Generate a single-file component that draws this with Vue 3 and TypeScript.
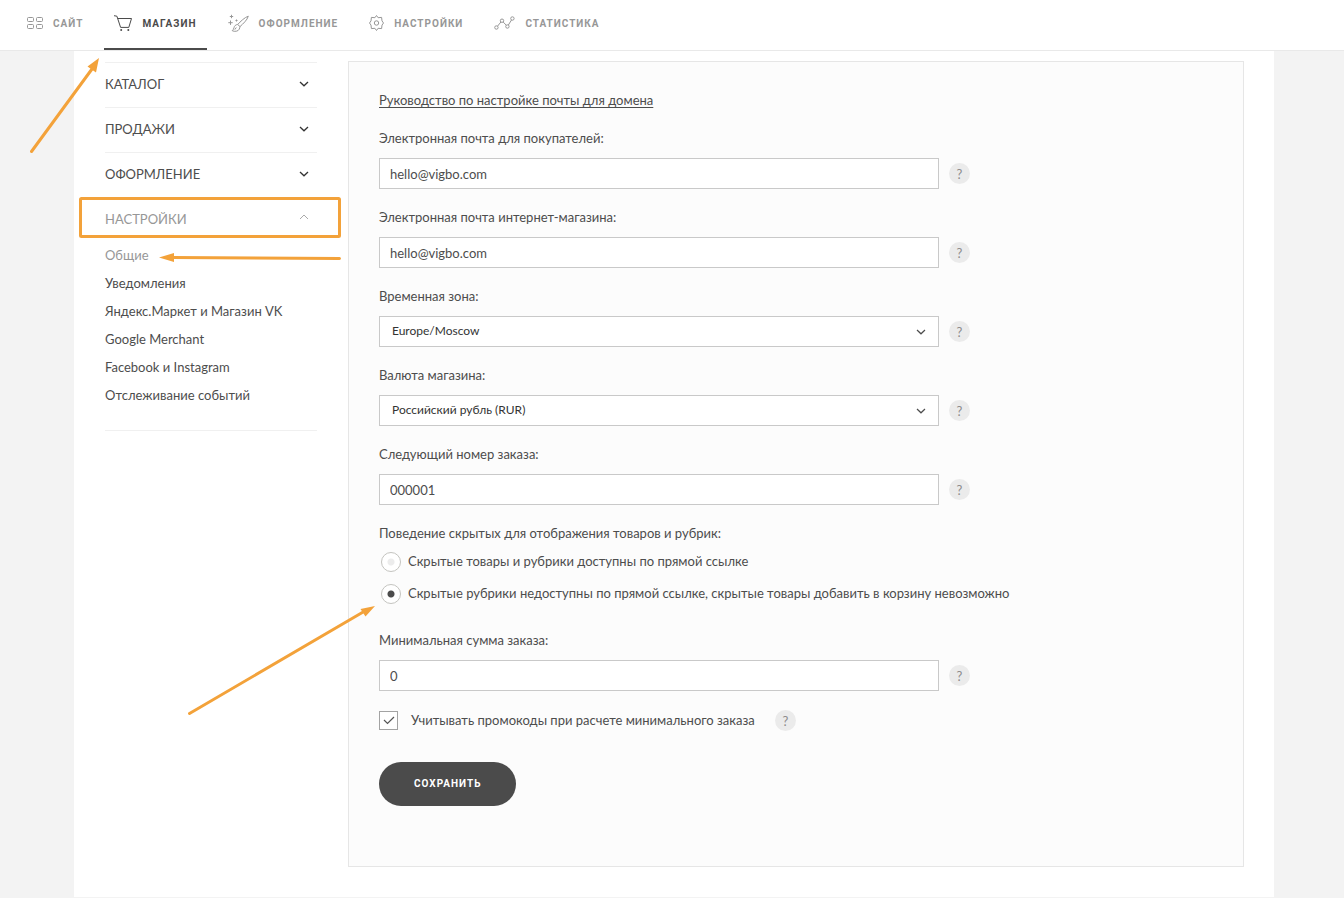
<script setup lang="ts">
import { ref } from 'vue'

interface NavItem { id: string; title: string }
interface Field {
  id: string
  label: string
  kind: 'text' | 'select'
  value: string
}

const nav: NavItem[] = [
  { id: 'site', title: 'Сайт' },
  { id: 'shop', title: 'Магазин' },
  { id: 'design', title: 'Оформление' },
  { id: 'settings', title: 'Настройки' },
  { id: 'stats', title: 'Статистика' },
]
const activeNav = ref('shop')

const sections: string[] = ['Каталог', 'Продажи', 'Оформление']
const links: string[] = [
  'Общие',
  'Уведомления',
  'Яндекс.Маркет и Магазин VK',
  'Google Merchant',
  'Facebook и Instagram',
  'Отслеживание событий',
]

const fields = ref<Field[]>([
  { id: 'customer-mail', label: 'Электронная почта для покупателей:', kind: 'text', value: 'hello@vigbo.com' },
  { id: 'shop-mail', label: 'Электронная почта интернет-магазина:', kind: 'text', value: 'hello@vigbo.com' },
  { id: 'timezone', label: 'Временная зона:', kind: 'select', value: 'Europe/Moscow' },
  { id: 'currency', label: 'Валюта магазина:', kind: 'select', value: 'Российский рубль (RUR)' },
  { id: 'next-order', label: 'Следующий номер заказа:', kind: 'text', value: '000001' },
])
const hiddenModes: string[] = [
  'Скрытые товары и рубрики доступны по прямой ссылке',
  'Скрытые рубрики недоступны по прямой ссылке, скрытые товары добавить в корзину невозможно',
]
const hiddenMode = ref(1)
const minimum = ref('0')
const usePromo = ref(true)
</script>

<template>
  <div class="page">
    <header class="topbar">
      <nav class="topnav">
        <a
          v-for="item in nav"
          :key="item.id"
          href="#"
          class="topnav-item"
          :class="{ active: item.id === activeNav }"
          @click.prevent="activeNav = item.id"
        >
          <svg v-if="item.id === 'site'" class="icon" width="16" height="18" viewBox="0 0 16 18">
            <rect x="0.5" y="3.5" width="6" height="4" rx="1" />
            <rect x="9.5" y="3.5" width="6" height="4" rx="1" />
            <rect x="0.5" y="10.5" width="6" height="4" rx="1" />
            <rect x="9.5" y="10.5" width="6" height="4" rx="1" />
          </svg>
          <svg v-else-if="item.id === 'shop'" class="icon" width="18" height="18" viewBox="0 0 18 18">
            <path d="M0 1.700L2.900 2.200L6.600 13.400H14.800L17.500 4.500H3.700" />
            <circle class="solid" cx="7.2" cy="16" r="1" />
            <circle class="solid" cx="14.3" cy="16" r="1" />
          </svg>
          <svg v-else-if="item.id === 'design'" class="icon" width="21" height="18" viewBox="0 0 21 18">
            <path d="M3.500 0.800v3.400M1.800 2.500h3.400M2.500 6.500v4.400M0.300 8.700h4.400M8.500 5.500v2M7.500 6.500h2" />
            <path d="M20.300 2.200C17 3.200 12.300 7.500 9.700 10.500L12 12.600C15 9.800 19.300 6 20.300 2.200Z" />
            <path d="M9.700 10.500C7.600 10.600 6.300 12 6 13.700C5.800 15 5.100 15.900 4.200 16.700C6.600 17.900 10.300 17.400 11.200 15.200C11.600 14.200 11.900 13.500 12 12.600M8.300 13.500L6.800 15.600" />
          </svg>
          <svg v-else-if="item.id === 'settings'" class="icon" width="15" height="18" viewBox="0 0 15 18">
            <path d="M7.500 1.500L9.100 3.700L12.600 3.400L13 6.900L14.500 9L13 11.100L12.600 14.600L9.100 14.300L7.500 16.500L5.900 14.300L2.400 14.600L2 11.100L0.500 9L2 6.900L2.400 3.400L5.900 3.700Z" />
            <circle cx="7.5" cy="9" r="2.2" />
          </svg>
          <svg v-else class="icon" width="21" height="18" viewBox="0 0 21 18">
            <circle cx="2.400" cy="13.500" r="1.700" />
            <circle cx="8" cy="6.700" r="1.700" />
            <circle cx="13.400" cy="12.500" r="1.700" />
            <circle cx="18.400" cy="4.500" r="1.700" />
            <path d="M3.500 12.200L6.900 8M9.100 8L12.300 11.200M14.300 11.100L17.500 6" />
          </svg>
          <span>{{ item.title }}</span>
        </a>
      </nav>
    </header>

    <div class="body">
      <aside class="sidebar">
        <button v-for="s in sections" :key="s" type="button" class="section">
          <span>{{ s }}</span>
          <svg class="chevron" width="10" height="6" viewBox="0 0 10 6"><path d="M1 1L5 4.800L9 1" /></svg>
        </button>
        <button type="button" class="section open">
          <span>Настройки</span>
          <svg class="chevron" width="10" height="12" viewBox="0 0 10 12"><path d="M1 6L5 2L9 6" /></svg>
        </button>
        <ul class="links">
          <li v-for="(l, i) in links" :key="l">
            <a href="#" :class="{ current: i === 0 }">{{ l }}</a>
          </li>
        </ul>
      </aside>

      <main class="panel">
        <form class="form" @submit.prevent>
          <a href="#" class="guide">Руководство по настройке почты для домена</a>

          <div v-for="f in fields" :key="f.id" class="field">
            <label :for="f.id">{{ f.label }}</label>
            <div class="row">
              <input v-if="f.kind === 'text'" :id="f.id" v-model="f.value" type="text" class="control" />
              <div v-else class="select">
                <select :id="f.id" v-model="f.value" class="control">
                  <option>{{ f.value }}</option>
                </select>
                <svg class="chevron" width="10" height="6" viewBox="0 0 10 6"><path d="M1 1L5 4.800L9 1" /></svg>
              </div>
              <button type="button" class="help">?</button>
            </div>
          </div>

          <fieldset class="modes">
            <legend>Поведение скрытых для отображения товаров и рубрик:</legend>
            <label v-for="(m, i) in hiddenModes" :key="m" class="mode">
              <input v-model="hiddenMode" type="radio" name="hidden-mode" :value="i" />
              <span class="caption">{{ m }}</span>
            </label>
          </fieldset>

          <div class="field">
            <label for="minimum">Минимальная сумма заказа:</label>
            <div class="row">
              <input id="minimum" v-model="minimum" type="text" class="control" />
              <button type="button" class="help">?</button>
            </div>
          </div>

          <div class="promo">
            <label class="check">
              <span class="box">
                <input v-model="usePromo" type="checkbox" />
                <svg v-if="usePromo" width="12" height="9" viewBox="0 0 12 9"><path d="M1 4L4.500 7.500L11 1" /></svg>
              </span>
              <span class="caption">Учитывать промокоды при расчете минимального заказа</span>
            </label>
            <button type="button" class="help">?</button>
          </div>

          <button type="submit" class="save">Сохранить</button>
        </form>
      </main>
    </div>

    <svg class="marks" width="400" height="730" viewBox="0 0 400 730" aria-hidden="true">
      <rect x="80.500" y="198.500" width="259" height="38" rx="1" />
      <path d="M31.500 151.500L92 69M339.500 258.500L172 257.500M189.500 713.500L364 611.500" />
      <path class="head" d="M99 58L96 72.500L87.500 66.500ZM159 257.500L174 253V262ZM375 606L365.500 616.500L360.500 609Z" />
    </svg>
  </div>
</template>

<style>
body {
  background: #f3f3f3;
}
</style>

<style scoped>
.page {
  position: relative;
  min-height: 100vh;
  box-sizing: border-box;
  padding-bottom: 1px;
  display: flex;
  flex-direction: column;
  font: 13px/20px Lato, "Open Sans", sans-serif;
  color: #4d4d4d;
}
.topbar {
  background: #fff;
  border-bottom: 1px solid #e9e9e9;
  padding: 0 17px;
}
.topnav {
  display: flex;
  gap: 11px;
}
.topnav-item {
  display: flex;
  align-items: center;
  gap: 10px;
  height: 46px;
  padding: 0 10px 2px;
  border-bottom: 2px solid transparent;
  color: #979797;
  font-family: Roboto, "Open Sans", sans-serif;
  font-size: 10px;
  font-weight: 700;
  letter-spacing: 1px;
  text-transform: uppercase;
  text-decoration: none;
}
.topnav-item span {
  padding-top: 2px;
}
.topnav-item.active {
  color: #4b4b4b;
  border-bottom-color: #4b4b4b;
}
.icon {
  flex: none;
  fill: none;
  stroke: currentColor;
  stroke-width: 1;
}
.icon .solid {
  fill: currentColor;
  stroke: none;
}
.body {
  flex: 1;
  display: grid;
  grid-template-columns: 212px 1fr;
  gap: 31px;
  align-items: start;
  margin: 0 70px 0 74px;
  padding: 10px 30px 30px 31px;
  background: #fff;
}
.sidebar {
  margin-top: 1px;
  border-bottom: 1px solid #f0f0f0;
}
.section {
  display: flex;
  align-items: center;
  justify-content: space-between;
  width: 100%;
  height: 45px;
  padding: 0 8px 2px 0;
  border: 0;
  border-top: 1px solid #f0f0f0;
  background: none;
  font: inherit;
  color: inherit;
  text-transform: uppercase;
}
.section.open {
  height: 44px;
  padding-bottom: 1px;
  color: #979797;
}
.chevron {
  flex: none;
  fill: none;
  stroke: #333;
  stroke-width: 1.3;
}
.section.open .chevron {
  stroke: #aaa;
  stroke-width: 1;
}
.links {
  list-style: none;
  margin: 0;
  padding: 0 0 21px;
}
.links li {
  height: 28px;
  line-height: 28px;
}
.links a {
  color: inherit;
  text-decoration: none;
}
.links a.current {
  color: #979797;
}
.panel {
  min-width: 0;
  border: 1px solid #e6e6e6;
  background: #fcfcfc;
  padding: 28px 30px 60px;
}
.form {
  display: flex;
  flex-direction: column;
  align-items: flex-start;
  gap: 18px;
}
.guide {
  color: inherit;
  text-underline-offset: 2px;
}
.field {
  width: 100%;
  display: grid;
  gap: 10px;
}
.row {
  display: flex;
  align-items: center;
  gap: 10px;
}
.control {
  box-sizing: border-box;
  width: 100%;
  max-width: 560px;
  height: 31px;
  padding: 0 10px;
  border: 1px solid #c9c9c9;
  border-radius: 0;
  background: #fff;
  font: inherit;
  color: #4d4d4d;
}
.select {
  position: relative;
  width: 100%;
  max-width: 560px;
}
.select .control {
  display: block;
  appearance: none;
  padding: 0 30px 2px 12px;
  font-size: 12px;
  color: #333;
}
.select .chevron {
  position: absolute;
  right: 13px;
  top: 13px;
  stroke: #4d4d4d;
  stroke-width: 1.2;
  pointer-events: none;
}
.help {
  flex: none;
  width: 21px;
  height: 21px;
  padding: 0;
  border: 0;
  border-radius: 50%;
  background: #ebebeb;
  color: #8c8c8c;
  font: inherit;
}
.modes {
  margin: 0 0 2px;
  padding: 0;
  border: 0;
}
.modes legend {
  padding: 0;
  margin-bottom: 3px;
}
.mode {
  display: flex;
  align-items: center;
  gap: 7px;
  height: 32px;
}
.caption {
  padding-bottom: 2px;
  line-height: 18px;
}
.mode input {
  flex: none;
  appearance: none;
  width: 20px;
  height: 20px;
  margin: 0 0 0 2px;
  border: 1px solid #c4c4c0;
  border-radius: 50%;
  background: radial-gradient(circle, #ececec 3px, #fff 4px);
}
.mode input:checked {
  background: radial-gradient(circle, #4b4b4b 3px, #fff 4px);
}
.promo {
  display: flex;
  align-items: center;
  gap: 20px;
  margin-top: 1px;
}
.check {
  display: flex;
  align-items: center;
  gap: 13px;
}
.box {
  display: grid;
  place-items: center;
}
.box > * {
  grid-area: 1 / 1;
}
.box input {
  appearance: none;
  width: 19px;
  height: 19px;
  margin: 0;
  border: 1px solid #a3a3a3;
  background: #fff;
}
.box svg {
  position: relative;
  fill: none;
  stroke: #555;
  stroke-width: 1.2;
  pointer-events: none;
}
.save {
  margin-top: 13px;
  height: 44px;
  padding: 0 35px;
  border: 0;
  border-radius: 22px;
  background: #4b4b4b;
  color: #fff;
  font: 700 10px/20px Roboto, "Open Sans", sans-serif;
  letter-spacing: 1px;
  text-transform: uppercase;
}
.marks {
  position: absolute;
  left: 0;
  top: 0;
  fill: none;
  stroke: #f3a23a;
  stroke-width: 3;
  stroke-linecap: round;
  pointer-events: none;
}
.marks .head {
  fill: #f3a23a;
  stroke: none;
}
</style>
